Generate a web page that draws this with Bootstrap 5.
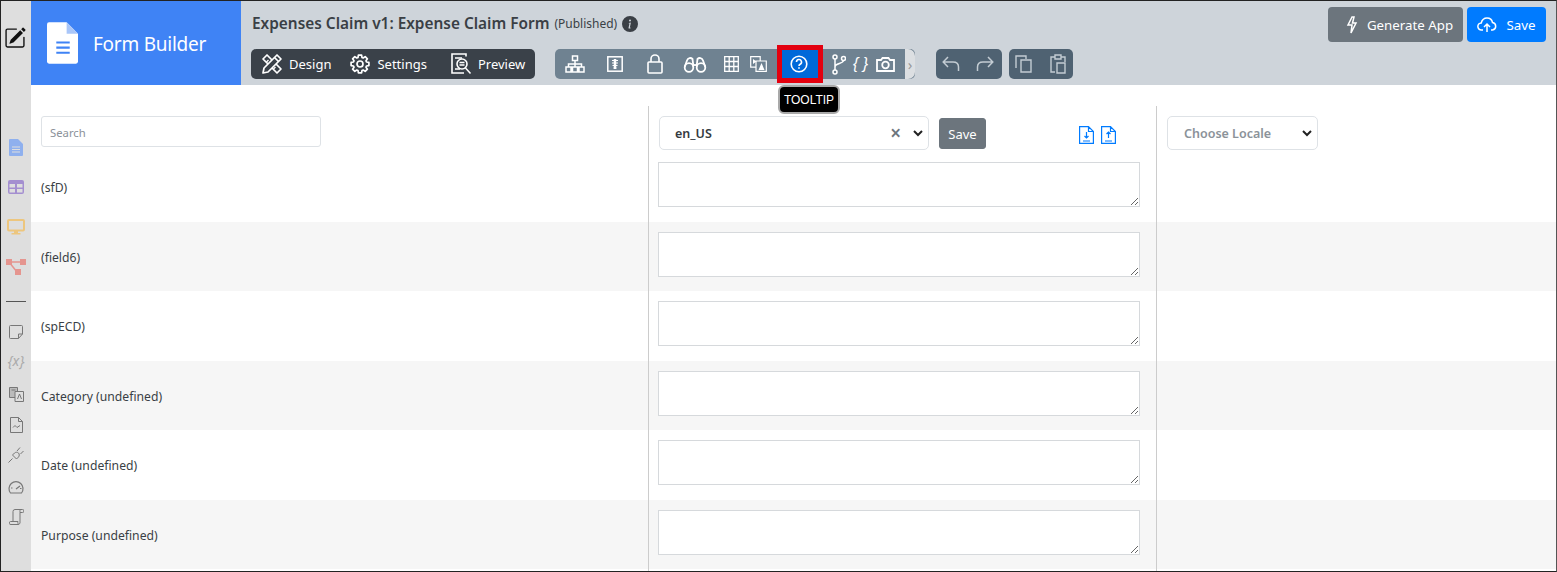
<!DOCTYPE html>
<html lang="en">
<head>
  <meta charset="UTF-8">
  <title>Form Builder</title>
  <link href="https://cdn.jsdelivr.net/npm/bootstrap@5.3.2/dist/css/bootstrap.min.css" rel="stylesheet">
  <style>
    html, body { height: 100%; overflow: hidden; }
    body { font-family: "Noto Sans", "Open Sans", sans-serif; font-size: 12px; color: #343a40; }
    svg { display: block; flex: none; }
    .frame { height: 572px; border: 1px solid #222; border-right-color: #555; overflow: hidden; }
    .side-rail { width: 30px; background: #dedede; padding-top: 26px; }
    .rail-line { width: 20px; height: 1px; background: #555; margin: 26px 0 23px; }
    .top-bar { height: 84px; background: #ced4da; }
    .brand-box { width: 210px; background: #3f83f5; color: #fff; font-size: 19px; letter-spacing: -.25px; padding-left: 16px; gap: 15px; }
    .brand-box span { padding-top: 2px; }
    .form-title { font-size: 15.4px; font-weight: 600; color: #3a3f45; margin: 12px 0 0 11px; height: 22px; gap: 5px; }
    .form-title small { font-size: 12px; font-weight: 400; }
    .tool-row { margin: 14px 0 0 10px; }
    .tool-group { height: 30px; border-radius: 5px; color: #fff; }
    .tool-group span { padding-top: 2px; }
    .group-dark { background: #3a4149; width: 284px; font-size: 13px; }
    .group-slate { background: #6f8291; width: 360px; margin-left: 20px; }
    .group-end { width: 10px; height: 30px; background: #dcdfe2; border-radius: 0 7px 7px 0; color: #999; }
    .group-deep { background: #4f6272; width: 66px; margin-left: 21px; padding-left: 6px; gap: 16px; }
    .group-deep2 { background: #4f6272; width: 64px; margin-left: 7px; padding-left: 6px; gap: 18px; }
    .help-btn { width: 46px; height: 38px; background: #0069d9; border: 5px solid #e3000f; padding-right: 3px; }
    .tool-tip { position: absolute; left: 747px; top: 84px; width: 62px; height: 29px; background: #000; color: #fff; border: 2px solid #a9a9a9; border-radius: 6px; font-family: "Liberation Sans", sans-serif; font-size: 12px; z-index: 5; }
    .top-btn { height: 35px; border: 0; border-radius: 4px; font-size: 13.3px; color: #fff; gap: 9px; }
    .top-btn span { padding-top: 2px; }
    .btn-gen { width: 135px; background: #6c757d; margin-right: 4px; padding-left: 14px; }
    .btn-up { width: 79px; background: #007bff; margin-right: 10px; }
    .grid-row { display: grid; grid-template-columns: 617px 509px 1fr; height: 69.5px; }
    .grid-row.head-row { height: 46.4px; margin-top: 21px; }
    .grid-row:nth-child(odd):not(.head-row) { background: #f6f6f6; }
    .mid-cell { border-left: 1px solid #ccc; border-right: 1px solid #ccc; padding: 9.7px 0 0 9px; }
    .name-cell { padding: 2.6px 10px 0; color: #3a3f45; font-size: 12.2px; }
    .head-row .name-cell { padding-top: 0; }
    .search-box { width: 280px; height: 31px; margin-top: 10px; font-size: 11.3px; border-radius: 3px; padding: 2px 8px 0; }
    .search-box::placeholder { color: #8b9299; }
    .locale-box { position: relative; width: 270px; margin: 10px 10px 0 10px; }
    .locale-box .form-select, .locale-pick {
      height: 34px; font-size: 12.5px; font-weight: 600; padding: 2px 0 0 15px; border-radius: 5px; color: #343a40;
      background-image: url("data:image/svg+xml,%3csvg xmlns='http://www.w3.org/2000/svg' viewBox='0 0 10 7'%3e%3cpath fill='none' stroke='%23222' stroke-width='2' d='M1 1l4 4 4-4'/%3e%3c/svg%3e");
      background-size: 10px 7px; background-position: right 5px center;
    }
    .clear-x { position: absolute; right: 28px; top: 7px; font-size: 19px; font-weight: 600; color: #6c757d; line-height: 20px; }
    .save-small { width: 47px; height: 31px; margin-top: 12px; padding: 2px 0 0; font-size: 13px; border-radius: 3px; }
    .file-icons { gap: 7px; margin: 20px 0 0 93px; }
    .locale-pick { width: 151px; margin: 10px 0 0 10px; color: #8b9299; padding-left: 16px; }
    .note-box { display: block; width: 482px; height: 45px; border: 1px solid #d6d9dc; resize: both; }
  </style>
</head>
<body>
  <div class="frame d-flex">
    <!-- left rail -->
    <div class="side-rail d-flex flex-column align-items-center flex-shrink-0">
      <svg width="22" height="22" viewBox="0 0 16 16" fill="#111" style="margin-left:-2px"><path d="M15.5 1.9a.5.5 0 0 1 0 .7l-1 1.1-2-2 1-1.100a.5.5 0 0 1 .7 0zm-1.7 2.500-2-2L4.900 9.200a.5.5 0 0 0-.1.2l-.8 2.400a.25.25 0 0 0 .3.3l2.400-.8a.5.5 0 0 0 .2-.1z"/><path fill-rule="evenodd" d="M1 13.500A1.500 1.500 0 0 0 2.500 15h11a1.500 1.500 0 0 0 1.500-1.500v-6a.5.5 0 0 0-1 0v6a.5.5 0 0 1-.5.5h-11a.5.5 0 0 1-.5-.5v-11a.5.5 0 0 1 .5-.5H9a.5.5 0 0 0 0-1H2.500A1.500 1.500 0 0 0 1 2.500z"/></svg>
      <svg width="14" height="17" viewBox="0 0 14 17" style="margin-top:90px"><path fill="#8fb0ee" d="M1 0h8l5 5v11a1 1 0 0 1-1 1H1a1 1 0 0 1-1-1V1a1 1 0 0 1 1-1z"/><path d="M3 8h8M3 10.500h8M3 13h8" stroke="#dedede"/></svg>
      <svg width="16" height="14" viewBox="0 0 16 14" style="margin-top:24px"><rect width="16" height="14" rx="2" fill="#a48fd0"/><path d="M1.500 4h5.500v3.500H1.500zM9 4h5.500v3.500H9zM1.500 9h5.500v3.500H1.500zM9 9h5.500v3.500H9z" fill="#dedede"/></svg>
      <svg width="18" height="16" viewBox="0 0 18 16" style="margin-top:25px"><rect x="1" y="1" width="16" height="10.500" rx="1" fill="none" stroke="#edc67e" stroke-width="2"/><path d="M7 12h4v2H7zM4.500 14h9v1.500h-9z" fill="#edc67e"/></svg>
      <svg width="20" height="17" viewBox="0 0 20 17" style="margin-top:23px"><path d="M3 4h14M3 4l8 10" stroke="#e5958f" stroke-width="1.500"/><path d="M0 1h6v6H0zM14 1h6v6h-6zM9 11h6v6H9z" fill="#e5958f"/></svg>
      <div class="rail-line"></div>
      <svg width="14" height="14" viewBox="0 0 14 14" fill="none" stroke="#777"><path d="M1.500.5h11a1 1 0 0 1 1 1V9l-4 4.500h-8a1 1 0 0 1-1-1v-11a1 1 0 0 1 1-1zM13.500 9h-4v4.500"/></svg>
      <span class="fst-italic" style="font-size:14px;line-height:14px;color:#aaa;margin-top:15px">{x}</span>
      <svg width="15" height="15" viewBox="0 0 15 15" fill="none" stroke="#777" style="margin-top:19px"><path d="M.5.5h8v10h-8z" fill="#bbb"/><path d="M6 4.500h8.500v10H6z" fill="#dedede"/><path d="M8.500 12l2-5 2 5M2.500 3h4"/></svg>
      <svg width="13" height="16" viewBox="0 0 13 16" fill="none" stroke="#777" style="margin-top:15px"><path d="M.5.500h8l4 4v11H.5zM8.500.5v4h4M3 10.500l2-2 2 2 3-2"/></svg>
      <svg width="16" height="16" viewBox="0 0 16 16" fill="none" stroke="#777" style="margin-top:14px"><path d="M.5 15.500l4-4M4.500 8l4 4 2-2c1-1 1-3 0-4s-3-1-4 0zM9 4l3-3.500M12.500 7l3-3"/></svg>
      <svg width="16" height="14" viewBox="0 0 16 14" fill="none" stroke="#777" style="margin-top:17px"><path d="M2.500 13a7 7 0 1 1 11 0zM8 9l4-3M3 8h1.500M12 8.500h1.500" stroke-width="1.200"/></svg>
      <svg width="15" height="16" viewBox="0 0 15 16" fill="none" stroke="#777" style="margin-top:15px"><path d="M4 12.500V2.500a2 2 0 0 1 2-2h7.500a1.500 1.500 0 0 1 0 3H11M11.500.8c-.8.500-.5 1.500-.5 2.700V13a2 2 0 0 1-2 2.500H2a1.500 1.500 0 0 1-.5-3H9c-.5 1 0 2 .5 3"/></svg>
    </div>

    <div class="flex-grow-1 d-flex flex-column position-relative" style="min-width:0">
      <!-- header -->
      <div class="top-bar d-flex flex-shrink-0">
        <div class="brand-box d-flex align-items-center flex-shrink-0">
          <svg width="31" height="42" viewBox="0 0 30 40"><path fill="#fff" d="M2 0h17l11 11v27a2 2 0 0 1-2 2H2a2 2 0 0 1-2-2V2a2 2 0 0 1 2-2z"/><path d="M19 0v11h11z" fill="#a9c6f9"/><path d="M9 19.500h13M9 24.500h13M9 29.500h13" stroke="#3f83f5" stroke-width="2"/></svg>
          <span>Form Builder</span>
        </div>
        <div class="flex-grow-1 d-flex flex-column" style="min-width:0">
          <div class="form-title d-flex align-items-center">
            <span>Expenses Claim v1: Expense Claim Form</span>
            <small>(Published)</small>
            <svg width="16" height="16" viewBox="0 0 16 16" fill="#3a3f45"><path d="M8 16A8 8 0 1 0 8 0a8 8 0 0 0 0 16zm.9-9.400-1 4.700c-.1.300 0 .500.300.500.200 0 .500-.1.700-.2l-.1.400c-.3.300-.8.600-1.400.600-.7 0-1-.4-.8-1.200l.8-3.500c.1-.3 0-.4-.3-.4l-.4-.1.100-.300zM8 5.500a1 1 0 1 1 0-2 1 1 0 0 1 0 2z"/></svg>
          </div>
          <div class="tool-row d-flex align-items-center">
            <div class="tool-group group-dark d-flex align-items-center">
              <svg width="22" height="22" viewBox="0 0 22 22" fill="none" stroke="#fff" stroke-width="1.700" stroke-linejoin="round" style="margin-left:10px"><path d="M2 6l4-4 14 14-4 4z" /><path d="M5.500 9l2-2M9 12.500l2-2M12.500 16l2-2" stroke-width="1.300"/><path d="M16 2l4 4L7 19l-5 1 1-5z" fill="#3a4149"/><path d="M13.500 4.500l4 4"/></svg>
              <span style="margin-left:6px">Design</span>
              <svg width="20" height="20" viewBox="0 0 20 20" fill="none" stroke="#fff" stroke-width="1.700" stroke-linejoin="round" style="margin-left:19px"><circle cx="10" cy="10" r="3"/><path d="M18.900 8.400v3.200l-2.400.4-.5 1.200 1.400 2-2.200 2.200-2-1.400-1.200.5-.4 2.400H8.400L8 16.500 6.800 16l-2 1.400-2.200-2.200 1.400-2-.5-1.200-2.400-.4V8.400L3.500 8 4 6.800l-1.400-2 2.200-2.200 2 1.400L8 3.500l.4-2.400h3.200l.4 2.400 1.200.5 2-1.400 2.200 2.200-1.400 2 .5 1.200z"/></svg>
              <span style="margin-left:7px">Settings</span>
              <svg width="22" height="22" viewBox="0 0 22 22" fill="none" stroke="#fff" stroke-width="1.600" style="margin-left:24px"><path d="M15 3.500V1H1v19h12"/><circle cx="11" cy="11" r="5" fill="#3a4149"/><path d="M14.500 15l5 5.500M8.500 9.500h5M8.500 12h5M4 5h7M4 16h5" stroke-width="1.500"/></svg>
              <span style="margin-left:5px">Preview</span>
            </div>
            <div class="tool-group group-slate d-flex align-items-center">
              <svg width="20" height="18" viewBox="0 0 20 18" fill="none" stroke="#fff" stroke-width="1.500" style="margin-left:10px"><path d="M7.500 1h5v4.500h-5zM10 5.500V12M3.500 12V9h13v3M1 12h5v5H1zM7.500 12h5v5h-5zM14 12h5v5h-5z"/></svg>
              <svg width="16" height="16" viewBox="0 0 16 16" style="margin-left:22px"><rect x=".8" y=".8" width="14.400" height="14.400" fill="none" stroke="#fff" stroke-width="1.500"/><path d="M8 3v10" stroke="#fff" stroke-width="2.500"/><path d="M5 4.500h6M5 7h6M5.500 9.500h5M6.500 12h3" stroke="#fff" stroke-width="1.200"/></svg>
              <svg width="16" height="20" viewBox="0 0 16 20" fill="none" stroke="#fff" stroke-width="1.600" style="margin-left:24px"><rect x="1" y="8" width="14" height="11" rx="1"/><path d="M4 8V5a4 4 0 0 1 8 0v3"/></svg>
              <svg width="24" height="17" viewBox="0 0 24 17" fill="none" stroke="#fff" stroke-width="1.800" style="margin-left:20px"><circle cx="6" cy="11.500" r="4.300"/><circle cx="18" cy="11.500" r="4.300"/><path d="M1.700 11L4 4.500C5 1.500 8 1.500 9.500 3l.8 6.500c1-.7 2.400-.7 3.400 0l.8-6.500C16 1.500 19 1.500 20 4.500l2.300 6.500"/></svg>
              <svg width="15" height="16" viewBox="0 0 15 16" fill="none" stroke="#fff" stroke-width="1.300" style="margin-left:17px"><path d="M.7.700h13.600v14.600H.7zM.7 5.500h13.600M.7 10.500h13.600M5.200.7v14.600M9.800.7v14.600"/></svg>
              <svg width="17" height="16" viewBox="0 0 17 16" fill="none" stroke="#fff" stroke-width="1.200" style="margin-left:11px"><path d="M.7.700h9.500v10.500H.7z"/><path d="M6 5h10.300v10.300H6z" fill="#6f8291"/><path d="M8.500 14l3-7 3 7z" fill="#fff" stroke="none"/><path d="M3 3l3.500 2.500L3 8z" fill="#fff" stroke="none"/></svg>
              <div class="help-btn d-flex align-items-center justify-content-center" style="margin-left:10px">
                <svg width="18" height="18" viewBox="0 0 18 18" fill="none" stroke="#fff" stroke-width="1.600"><circle cx="9" cy="9" r="7.800"/><path d="M6.500 7a2.500 2.500 0 1 1 3.700 2.200c-.8.500-1.200 1-1.200 1.800"/><path d="M9 12.300v1.400"/></svg>
              </div>
              <svg width="14" height="21" viewBox="0 0 14 21" fill="none" stroke="#fff" stroke-width="1.500" style="margin-left:9px"><circle cx="3" cy="3" r="2"/><circle cx="3" cy="18" r="2"/><circle cx="11.500" cy="4.500" r="2"/><path d="M3 5v11M3 13c0-4 8-3 8.500-6.500"/></svg>
              <span class="fst-italic" style="font-family:'Liberation Sans',sans-serif;font-size:16px;margin-left:7px;width:17px;line-height:20px;white-space:nowrap;padding-top:0">{ }</span>
              <svg width="19" height="15" viewBox="0 0 19 15" fill="none" stroke="#fff" stroke-width="1.800" style="margin-left:6px"><path d="M1 3h4l1.500-2h6L14 3h4v11H1z"/><circle cx="9.500" cy="8" r="3.300"/></svg>
              <div class="group-end d-flex align-items-center justify-content-center ms-auto" style="font-size:15px">›</div>
            </div>
            <div class="tool-group group-deep d-flex align-items-center">
              <svg width="18" height="16" viewBox="0 0 18 16" fill="none" stroke="#c3ccd3" stroke-width="1.500"><path d="M6 1L1.200 6 6 11M1.500 6H11c3.500 0 5.500 2 5.500 5v4"/></svg>
              <svg width="18" height="16" viewBox="0 0 18 16" fill="none" stroke="#c3ccd3" stroke-width="1.500"><path d="M12 1l4.800 5L12 11M16.500 6H7C3.500 6 1.500 8 1.500 11v4"/></svg>
            </div>
            <div class="tool-group group-deep2 d-flex align-items-center">
              <svg width="17" height="18" viewBox="0 0 17 18" fill="none" stroke="#c3ccd3" stroke-width="1.400"><path d="M1 13V1h10v3M6 5h10v12H6z"/></svg>
              <svg width="16" height="20" viewBox="0 0 16 20" fill="none" stroke="#c3ccd3" stroke-width="1.400"><path d="M5 3H1v15h4M11 3h4v5M5 1h6v4H5zM7 9h8v10H7z"/></svg>
            </div>
          </div>
        </div>
        <div class="d-flex align-items-start flex-shrink-0 position-absolute end-0" style="top:6px">
          <button class="top-btn btn-gen d-flex align-items-center justify-content-center">
            <svg width="12" height="18" viewBox="0 0 12 18" fill="none" stroke="#fff" stroke-width="1.500"><path d="M6 1L2 9h4l-1 8 5-10H6.500L8 1z"/></svg>
            <span>Generate App</span>
          </button>
          <button class="top-btn btn-up d-flex align-items-center justify-content-center">
            <svg width="20" height="16" viewBox="0 0 20 16" fill="none" stroke="#fff" stroke-width="1.500"><path d="M6 13H4.500a3.500 3.500 0 0 1-.3-7C5 3 7.500 1 10 1c3 0 5 2 5.500 4.500a3.800 3.800 0 0 1 0 7.500H14M10 15V7M7 10l3-3 3 3"/></svg>
            <span>Save</span>
          </button>
        </div>
      </div>

      <div class="tool-tip d-flex align-items-center justify-content-center">TOOLTIP</div>

      <!-- translation table -->
      <div class="flex-grow-1">
        <div class="grid-row head-row">
          <div class="name-cell"><input class="form-control search-box" placeholder="Search"></div>
          <div class="mid-cell p-0 d-flex">
            <div class="locale-box">
              <select class="form-select"><option>en_US</option></select>
              <span class="clear-x">×</span>
            </div>
            <button class="btn btn-secondary save-small">Save</button>
            <div class="file-icons d-flex">
              <svg width="15" height="18" viewBox="0 0 15 18" fill="none" stroke="#007bff" stroke-width="1.200"><path d="M.6.600h8.900l4.900 4.900v11.900H.6zM9.500.6v4.900h4.900M7.500 6v6M5.500 10l2 2 2-2M4 15h7"/></svg>
              <svg width="15" height="18" viewBox="0 0 15 18" fill="none" stroke="#007bff" stroke-width="1.200"><path d="M.6.600h8.900l4.900 4.900v11.900H.6zM9.500.6v4.900h4.900M7.500 12V6M5.500 8l2-2 2 2M4 15h7"/></svg>
            </div>
          </div>
          <div><select class="form-select locale-pick"><option>Choose Locale</option></select></div>
        </div>
        <div class="grid-row"><div class="name-cell d-flex align-items-center">(sfD)</div><div class="mid-cell"><textarea class="note-box"></textarea></div><div></div></div>
        <div class="grid-row"><div class="name-cell d-flex align-items-center">(field6)</div><div class="mid-cell"><textarea class="note-box"></textarea></div><div></div></div>
        <div class="grid-row"><div class="name-cell d-flex align-items-center">(spECD)</div><div class="mid-cell"><textarea class="note-box"></textarea></div><div></div></div>
        <div class="grid-row"><div class="name-cell d-flex align-items-center">Category (undefined)</div><div class="mid-cell"><textarea class="note-box"></textarea></div><div></div></div>
        <div class="grid-row"><div class="name-cell d-flex align-items-center">Date (undefined)</div><div class="mid-cell"><textarea class="note-box"></textarea></div><div></div></div>
        <div class="grid-row"><div class="name-cell d-flex align-items-center">Purpose (undefined)</div><div class="mid-cell"><textarea class="note-box"></textarea></div><div></div></div>
        <div class="grid-row"><div></div><div class="mid-cell"></div><div></div></div>
      </div>
    </div>
  </div>
</body>
</html>
